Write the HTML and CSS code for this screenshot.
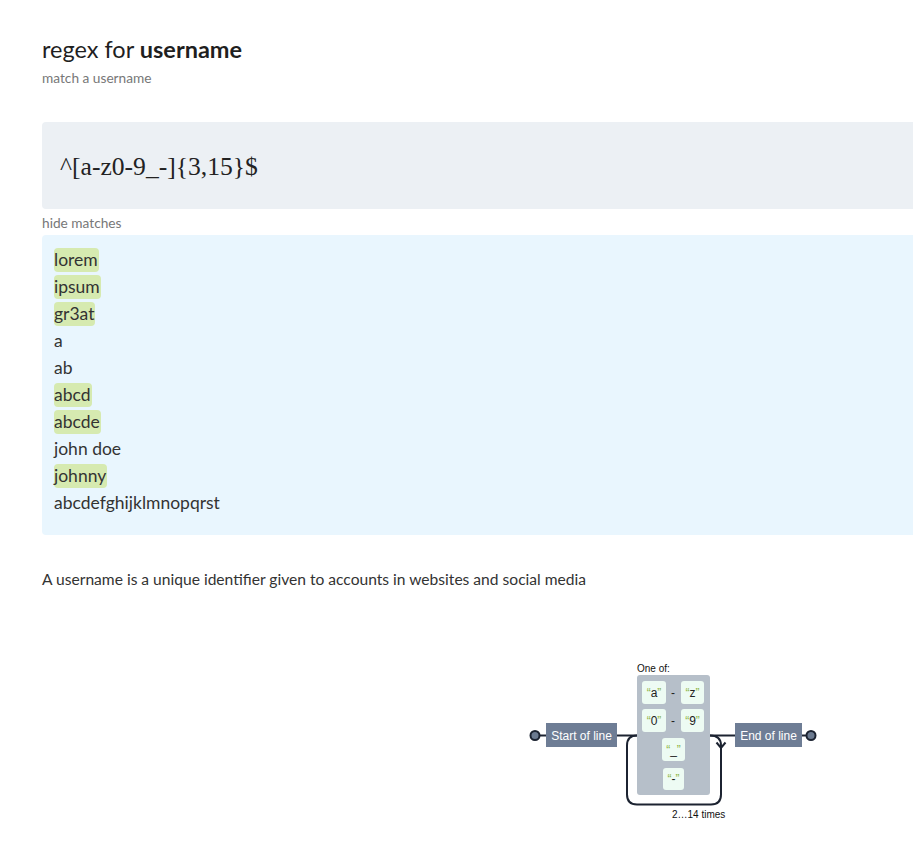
FILE: index.html
```html
<!DOCTYPE html>
<html lang="en">
<head>
<meta charset="utf-8">
<title>regex for username</title>
<link rel="stylesheet" href="styles.css">
</head>
<body>
<main class="page">
  <h1 class="title">regex for <strong>username</strong></h1>
  <p class="subtitle">match a username</p>

  <div class="regex-box"><code class="regex">^[a-z0-9_-]{3,15}$</code></div>
  <p class="toggle">hide matches</p>

  <div class="matches">
    <div class="row"><span class="hit">lorem</span></div>
    <div class="row"><span class="hit">ipsum</span></div>
    <div class="row"><span class="hit">gr3at</span></div>
    <div class="row"><span>a</span></div>
    <div class="row"><span>ab</span></div>
    <div class="row"><span class="hit">abcd</span></div>
    <div class="row"><span class="hit">abcde</span></div>
    <div class="row"><span>john doe</span></div>
    <div class="row"><span class="hit">johnny</span></div>
    <div class="row"><span>abcdefghijklmnopqrst</span></div>
  </div>

  <p class="desc">A username is a unique identifier given to accounts in websites and social media</p>

  <div class="diagram">
    <svg class="rail" width="300" height="170" viewBox="0 0 300 170" xmlns="http://www.w3.org/2000/svg">
      <g class="wire" fill="none" stroke="#1c2331" stroke-width="2">
        <path d="M14.5 80.5 H21"/>
        <path d="M92 80.5 H112"/>
        <path d="M185 80.5 H210"/>
        <path d="M277 80.5 H281.5"/>
        <path d="M185 80.5 q11 0 11 10 v49 q0 10 -10 10 h-74 q-10 0 -10 -10 v-49 q0 -10 10 -10"/>
        <path d="M191.5 87.5 L196 93 L200.5 87.5"/>
      </g>
      <circle cx="10" cy="80.5" r="4.5" fill="#6b7a90" stroke="#1c2331" stroke-width="2"/>
      <circle cx="286" cy="80.5" r="4.5" fill="#6b7a90" stroke="#1c2331" stroke-width="2"/>

      <rect x="21" y="68" width="71" height="24" fill="#6e7d95"/>
      <text class="anchor-label" x="56.5" y="84.5" text-anchor="middle">Start of line</text>
      <rect x="210" y="68" width="67" height="24" fill="#6e7d95"/>
      <text class="anchor-label" x="243.5" y="84.5" text-anchor="middle">End of line</text>

      <text class="small" x="112" y="17">One of:</text>
      <rect x="112" y="20" width="73" height="120" rx="3" fill="#b6bfc9"/>

      <rect x="117" y="26" width="24" height="23" rx="3" fill="#edfbf3"/>
      <text class="lit" x="129" y="42" text-anchor="middle"><tspan class="q">“</tspan>a<tspan class="q">”</tspan></text>
      <text class="lit" x="148" y="42" text-anchor="middle">-</text>
      <rect x="156" y="26" width="23" height="23" rx="3" fill="#edfbf3"/>
      <text class="lit" x="167.5" y="42" text-anchor="middle"><tspan class="q">“</tspan>z<tspan class="q">”</tspan></text>

      <rect x="117" y="54" width="24" height="23" rx="3" fill="#edfbf3"/>
      <text class="lit" x="129" y="70" text-anchor="middle"><tspan class="q">“</tspan>0<tspan class="q">”</tspan></text>
      <text class="lit" x="148" y="70" text-anchor="middle">-</text>
      <rect x="156" y="54" width="23" height="23" rx="3" fill="#edfbf3"/>
      <text class="lit" x="167.5" y="70" text-anchor="middle"><tspan class="q">“</tspan>9<tspan class="q">”</tspan></text>

      <rect x="137" y="83" width="23" height="23" rx="3" fill="#edfbf3"/>
      <text class="lit" x="148.5" y="99" text-anchor="middle"><tspan class="q">“</tspan>_<tspan class="q">”</tspan></text>

      <rect x="138" y="113" width="21" height="22" rx="3" fill="#edfbf3"/>
      <text class="lit" x="148.5" y="128" text-anchor="middle"><tspan class="q">“</tspan>-<tspan class="q">”</tspan></text>

      <text class="small" x="147" y="163">2…14 times</text>
    </svg>
  </div>
</main>
</body>
</html>
```

FILE: styles.css
```css
html, body {
  margin: 0;
  padding: 0;
  overflow-x: hidden;
  background: #ffffff;
}

body {
  font-family: Lato, "Noto Sans", sans-serif;
  color: #222;
}

.page {
  width: 1266px;
  padding: 33px 0 40px 42px;
  display: flex;
  flex-direction: column;
}

.title {
  margin: 0;
  font-size: 23.5px;
  line-height: 32px;
  font-weight: 400;
  color: #1f1f1f;
}

.title strong {
  font-weight: 700;
}

.subtitle {
  margin: 4px 0 0;
  font-size: 13.7px;
  line-height: 18px;
  color: #777;
}

.regex-box {
  margin-top: 35px;
  height: 87px;
  display: flex;
  align-items: center;
  padding: 0 18px;
  background: #ecf0f4;
  border-radius: 4px;
}

.regex {
  font-family: "Liberation Serif", "DejaVu Serif", serif;
  font-size: 25.6px;
  color: #222;
  padding-top: 2px;
}

.toggle {
  margin: 5px 0 0;
  font-size: 13.7px;
  line-height: 18px;
  color: #777;
}

.matches {
  margin-top: 3px;
  height: 300px;
  box-sizing: border-box;
  padding: 13px 12px 0;
  background: #e9f6fe;
  border-radius: 4px;
  display: flex;
  flex-direction: column;
  gap: 3px;
  font-size: 17.5px;
  color: #333;
}

.row {
  height: 24px;
  display: flex;
  align-items: center;
}

.row span {
  display: inline-block;
  line-height: 24px;
  border-radius: 4px;
}

.row .hit {
  background: #d6eab0;
  padding-right: 1px;
}

.desc {
  margin: 33px 0 0;
  font-size: 15.6px;
  line-height: 22px;
  color: #333;
}

.diagram {
  margin-top: 65px;
  display: flex;
  justify-content: center;
}

.rail {
  display: block;
}

.anchor-label {
  font-family: "Liberation Sans", Arial, sans-serif;
  font-size: 12px;
  fill: #ffffff;
}

.small {
  font-family: "Liberation Sans", Arial, sans-serif;
  font-size: 10px;
  fill: #111;
}

.lit {
  font-family: "Liberation Sans", Arial, sans-serif;
  font-size: 12px;
  fill: #222;
}

.lit .q {
  fill: #8db548;
}
```
